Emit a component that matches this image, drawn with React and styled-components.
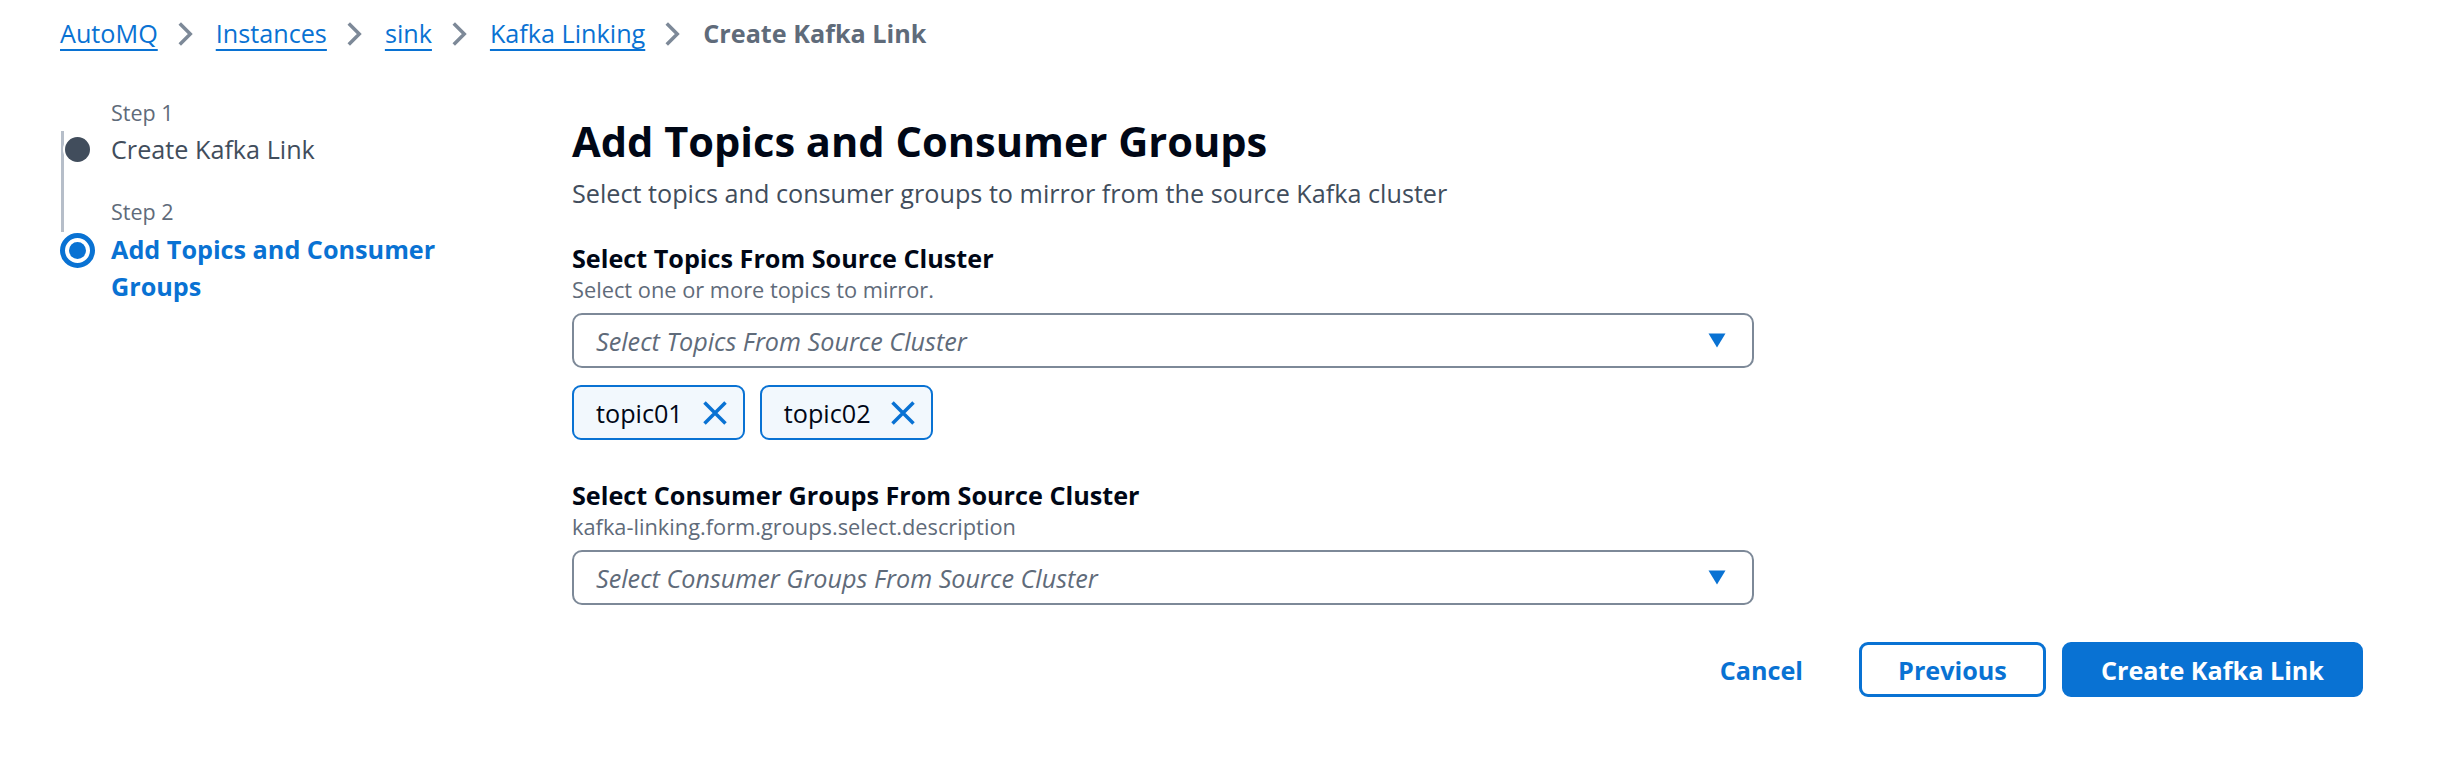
import styled, { createGlobalStyle } from "styled-components";

const GlobalStyle = createGlobalStyle`
  body {
    margin: 0;
    background: #ffffff;
    font-family: "Open Sans", "Noto Sans", sans-serif;
    color: #000716;
  }
`;

const Page = styled.div`
  padding: 16px 89px 0 60px;
`;

const Breadcrumbs = styled.nav`
  display: flex;
  align-items: center;
  height: 35px;
  font-size: 25.2px;
  line-height: 35px;
`;

const Crumb = styled.a`
  color: #0972d3;
  text-decoration: underline;
  text-decoration-thickness: 2px;
  text-underline-offset: 6px;
  cursor: pointer;
`;

const CurrentCrumb = styled.span`
  color: #5f6b7a;
  font-weight: 700;
`;

const Separator = styled.svg`
  width: 28px;
  height: 28px;
  margin: 0 17px 0 13px;
  fill: none;
  stroke: #7d8998;
  stroke-width: 2;
`;

const Layout = styled.div`
  display: grid;
  grid-template-columns: 400px 1fr;
  column-gap: 112px;
  margin-top: 48px;
`;

const Steps = styled.ol`
  list-style: none;
  margin: 0;
  padding: 0;
  display: flex;
  flex-direction: column;
  gap: 31px;
`;

const Step = styled.li`
  position: relative;

  ${(p) =>
    p.$connected &&
    `
    &::before {
      content: "";
      position: absolute;
      left: 1px;
      top: 32px;
      width: 3px;
      height: 101px;
      background: #b6bec9;
    }
  `}
`;

const StepLabel = styled.div`
  padding-left: 51px;
  margin-bottom: 5px;
  font-size: 21.5px;
  line-height: 28px;
  color: #5f6b7a;
`;

const StepRow = styled.div`
  display: grid;
  grid-template-columns: 51px 1fr;
  align-items: start;
`;

const Dot = styled.span`
  position: relative;
  width: 25px;
  height: 25px;
  margin: 5px 0 0 5px;
  border-radius: 50%;
  background: #414d5c;
  box-shadow: 0 0 0 2px #ffffff;
`;

const Ring = styled.span`
  display: flex;
  align-items: center;
  justify-content: center;
  box-sizing: border-box;
  width: 35px;
  height: 35px;
  margin-top: 2px;
  border: 5px solid #0972d3;
  border-radius: 50%;
  background: #ffffff;

  &::after {
    content: "";
    width: 17px;
    height: 17px;
    border-radius: 50%;
    background: #0972d3;
  }
`;

const StepTitle = styled.div`
  font-size: 25.2px;
  line-height: ${(p) => (p.$active ? "37px" : "35px")};
  font-weight: ${(p) => (p.$active ? 700 : 400)};
  color: ${(p) => (p.$active ? "#0972d3" : "#414d5c")};
`;

const Content = styled.main`
  padding-top: 16px;
`;

const Heading = styled.h1`
  margin: 0;
  font-size: 41.6px;
  line-height: 52px;
  font-weight: 700;
  color: #000716;
`;

const Lead = styled.p`
  margin: 9px 0 0;
  font-size: 25.2px;
  line-height: 35px;
  color: #414d5c;
`;

const Fields = styled.div`
  max-width: 1182px;
  margin-top: 30px;
  display: flex;
  flex-direction: column;
  gap: 38px;
`;

const Field = styled.div`
  display: flex;
  flex-direction: column;
`;

const Label = styled.label`
  font-size: 25.2px;
  line-height: 35px;
  font-weight: 700;
  color: #000716;
`;

const Hint = styled.div`
  font-size: 21.8px;
  line-height: 28px;
  color: #5f6b7a;
`;

const SelectBox = styled.button`
  display: flex;
  align-items: center;
  justify-content: space-between;
  box-sizing: border-box;
  width: 100%;
  height: 55px;
  margin-top: 9px;
  padding: 0 26px 0 22px;
  border: 2px solid #7d8998;
  border-radius: 10px;
  background: #ffffff;
  font-family: inherit;
  font-size: 25.2px;
  font-style: italic;
  color: #5f6b7a;
  text-align: left;
  cursor: pointer;
`;

const Tokens = styled.div`
  display: flex;
  gap: 15px;
  margin-top: 17px;
`;

const Token = styled.div`
  display: flex;
  align-items: center;
  gap: 18px;
  box-sizing: border-box;
  height: 55px;
  padding: 0 14px 0 22px;
  border: 2px solid #0972d3;
  border-radius: 9px;
  background: #f2f8fd;
  font-size: 25.2px;
  color: #000716;
`;

const Dismiss = styled.svg`
  width: 28px;
  height: 28px;
  fill: none;
  stroke: #0972d3;
  stroke-width: 2;
  cursor: pointer;
`;

const Actions = styled.div`
  display: flex;
  justify-content: flex-end;
  align-items: center;
  gap: 16px;
  margin-top: 37px;
`;

const Button = styled.button`
  box-sizing: border-box;
  height: 55px;
  padding: 0 ${(p) => (p.$variant === "link" ? "37px" : "36px")};
  border: 3px solid
    ${(p) => (p.$variant === "link" ? "transparent" : "#0972d3")};
  border-radius: 9px;
  background: ${(p) => (p.$variant === "primary" ? "#0972d3" : "#ffffff")};
  color: ${(p) => (p.$variant === "primary" ? "#ffffff" : "#0972d3")};
  font-family: inherit;
  font-size: 25.2px;
  font-weight: 700;
  cursor: pointer;
`;

const Chevron = () => (
  <Separator viewBox="0 0 16 16">
    <path d="m5 2 6 6-6 6" />
  </Separator>
);

const Caret = () => (
  <svg width="18" height="15" viewBox="0 0 18 15">
    <path d="M0.5 0.5h17L9 14.5z" fill="#0972d3" />
  </svg>
);

const topics = ["topic01", "topic02"];

function App() {
  return (
    <>
      <GlobalStyle />
      <Page>
        <Breadcrumbs>
          <Crumb>AutoMQ</Crumb>
          <Chevron />
          <Crumb>Instances</Crumb>
          <Chevron />
          <Crumb>sink</Crumb>
          <Chevron />
          <Crumb>Kafka Linking</Crumb>
          <Chevron />
          <CurrentCrumb>Create Kafka Link</CurrentCrumb>
        </Breadcrumbs>

        <Layout>
          <Steps>
            <Step $connected>
              <StepLabel>Step 1</StepLabel>
              <StepRow>
                <Dot />
                <StepTitle>Create Kafka Link</StepTitle>
              </StepRow>
            </Step>
            <Step>
              <StepLabel>Step 2</StepLabel>
              <StepRow>
                <Ring />
                <StepTitle $active>Add Topics and Consumer Groups</StepTitle>
              </StepRow>
            </Step>
          </Steps>

          <Content>
            <Heading>Add Topics and Consumer Groups</Heading>
            <Lead>
              Select topics and consumer groups to mirror from the source Kafka
              cluster
            </Lead>

            <Fields>
              <Field>
                <Label>Select Topics From Source Cluster</Label>
                <Hint>Select one or more topics to mirror.</Hint>
                <SelectBox>
                  Select Topics From Source Cluster
                  <Caret />
                </SelectBox>
                <Tokens>
                  {topics.map((t) => (
                    <Token key={t}>
                      {t}
                      <Dismiss viewBox="0 0 16 16">
                        <path d="m2 2 12 12M14 2 2 14" />
                      </Dismiss>
                    </Token>
                  ))}
                </Tokens>
              </Field>

              <Field>
                <Label>Select Consumer Groups From Source Cluster</Label>
                <Hint>kafka-linking.form.groups.select.description</Hint>
                <SelectBox>
                  Select Consumer Groups From Source Cluster
                  <Caret />
                </SelectBox>
              </Field>
            </Fields>

            <Actions>
              <Button $variant="link">Cancel</Button>
              <Button>Previous</Button>
              <Button $variant="primary">Create Kafka Link</Button>
            </Actions>
          </Content>
        </Layout>
      </Page>
    </>
  );
}

export default App;
